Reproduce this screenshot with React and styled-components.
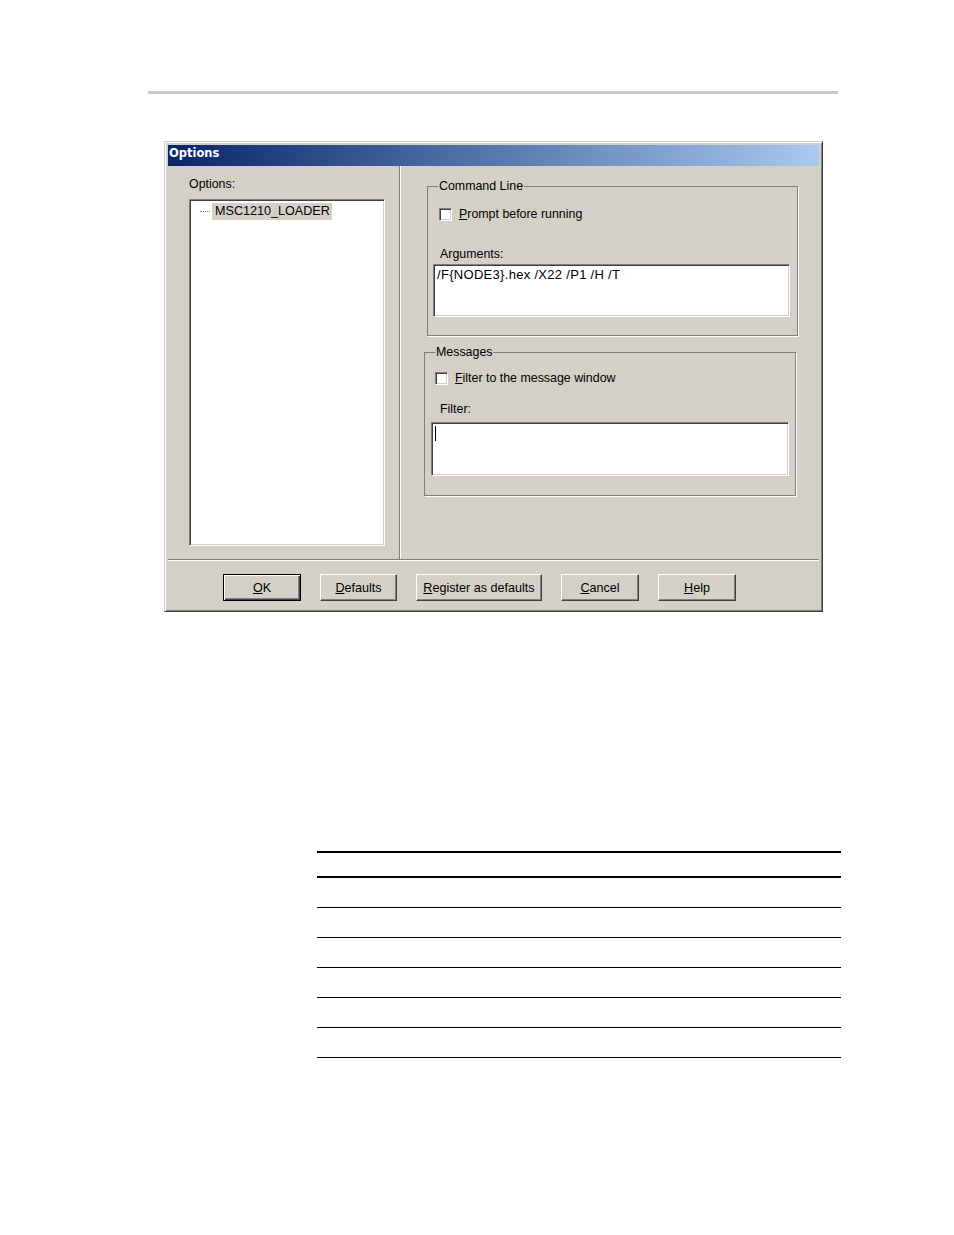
import React from 'react'
import styled, { createGlobalStyle } from 'styled-components'

const GlobalStyle = createGlobalStyle`
    body {
        margin: 0;
        background: #fff;
        font-family: "Liberation Sans", Arial, sans-serif;
    }
`

const face = '#d4d0c8'

const App = () => {
  return (
    <Page>
        <GlobalStyle />
        <TopRule />

        <Dialog>
            <TitleBar>Options</TitleBar>

            <Body>
                <Panes>
                    <LeftPane>
                        <PaneLabel>Options:</PaneLabel>
                        <TreeBox>
                            <TreeItem>
                                <TreeDots />
                                <TreeText>MSC1210_LOADER</TreeText>
                            </TreeItem>
                        </TreeBox>
                    </LeftPane>

                    <VSep />

                    <RightPane>
                        <Group $left={26} $width={371}>
                            <Legend>Command Line</Legend>
                            <CheckRow $top={14} $left={11}>
                                <CheckBox />
                                <span><u>P</u>rompt before running</span>
                            </CheckRow>
                            <FieldLabel $top={26} $left={12}>Arguments:</FieldLabel>
                            <TextBox $top={3} $left={5} $right={7} $height={53}>
                                /F&#123;NODE3&#125;.hex /X22 /P1 /H /T
                            </TextBox>
                            <GroupEnd $h={18} />
                        </Group>

                        <Group $left={23} $width={372} $top={9}>
                            <Legend>Messages</Legend>
                            <CheckRow $top={12} $left={10}>
                                <CheckBox />
                                <span><u>F</u>ilter to the message window</span>
                            </CheckRow>
                            <FieldLabel $top={17} $left={15}>Filter:</FieldLabel>
                            <TextBox $top={6} $left={6} $right={6} $height={54}>
                                <Caret />
                            </TextBox>
                            <GroupEnd $h={19} />
                        </Group>
                    </RightPane>
                </Panes>

                <HSep />

                <ButtonBar>
                    <Button $w={78} $default><u>O</u>K</Button>
                    <Button $w={77}><u>D</u>efaults</Button>
                    <Button $w={126}><u>R</u>egister as defaults</Button>
                    <Button $w={78}><u>C</u>ancel</Button>
                    <Button $w={78}><u>H</u>elp</Button>
                </ButtonBar>
            </Body>
        </Dialog>

        <Table>
            <TableHead />
            {[0, 1, 2, 3, 4, 5].map(i => <TableRow key={i} />)}
        </Table>
    </Page>
  )
}

export default App

const Page = styled.div`
    padding-top: 91px;
    padding-bottom: 100px;
`

const TopRule = styled.div`
    margin-left: 148px;
    width: 690px;
    height: 3px;
    background: #cbcbcb;
`

const Dialog = styled.div`
    box-sizing: border-box;
    margin: 47px 0 0 164px;
    width: 659px;
    padding: 3px;
    background: ${face};
    border: 1px solid;
    border-color: ${face} #404040 #404040 ${face};
    box-shadow: inset 1px 1px 0 #fff, inset -1px -1px 0 #808080;
    font-size: 12.4px;
    color: #000;
`

const TitleBar = styled.div`
    box-sizing: border-box;
    height: 21px;
    line-height: 20px;
    padding: 1px 0 0 1px;
    background: linear-gradient(to right, #0a246a, #a6caf0);
    color: #fff;
    font: bold 11.5px "DejaVu Sans", Verdana, sans-serif;
`

const Body = styled.div`
    display: flex;
    flex-direction: column;
`

const Panes = styled.div`
    display: flex;
    height: 393px;
`

const LeftPane = styled.div`
    width: 231px;
    padding: 11px 0 0 21px;
    box-sizing: border-box;
`

const PaneLabel = styled.div`
    line-height: 14px;
    margin-bottom: 8px;
`

const sunken = `
    box-sizing: border-box;
    background: #fff;
    border: 1px solid;
    border-color: #808080 #fff #fff #808080;
    box-shadow: inset 1px 1px 0 #404040, inset -1px -1px 0 ${face};
`

const TreeBox = styled.div`
    ${sunken}
    width: 196px;
    height: 347px;
    padding: 3px 0 0 10px;
`

const TreeItem = styled.div`
    display: flex;
    align-items: center;
`

const TreeDots = styled.span`
    width: 10px;
    border-top: 1px dotted #808080;
    margin-right: 2px;
`

const TreeText = styled.span`
    background: ${face};
    padding: 0 2px 0 3px;
    line-height: 17px;
    font-size: 12.6px;
`

const VSep = styled.div`
    width: 0;
    border-left: 1px solid #808080;
    border-right: 1px solid #fff;
`

const RightPane = styled.div`
    flex: 1;
    display: flex;
    flex-direction: column;
    padding-top: 13px;
`

const Group = styled.fieldset`
    box-sizing: border-box;
    margin: ${p => p.$top || 0}px 0 0 ${p => p.$left}px;
    width: ${p => p.$width}px;
    padding: 0;
    min-width: 0;
    border: 1px solid #808080;
    box-shadow: 1px 1px 0 #fff;
    display: flex;
    flex-direction: column;
`

const Legend = styled.legend`
    margin-left: 10px;
    padding: 0 1px;
    line-height: 14px;
    background: ${face};
`

const CheckRow = styled.div`
    display: flex;
    align-items: center;
    gap: 7px;
    margin: ${p => p.$top}px 0 0 ${p => p.$left}px;
    line-height: 14px;
`

const CheckBox = styled.span`
    ${sunken}
    width: 13px;
    height: 13px;
    flex: none;
`

const FieldLabel = styled.div`
    margin: ${p => p.$top}px 0 0 ${p => p.$left}px;
    line-height: 14px;
`

const TextBox = styled.div`
    ${sunken}
    margin: ${p => p.$top}px ${p => p.$right}px 0 ${p => p.$left}px;
    height: ${p => p.$height}px;
    padding: 3px 3px;
    line-height: 14px;
    font-size: 13px;
    letter-spacing: 0.3px;
    white-space: pre;
`

const Caret = styled.span`
    display: inline-block;
    width: 1px;
    height: 15px;
    background: #000;
    vertical-align: top;
`

const GroupEnd = styled.div`
    height: ${p => p.$h}px;
`

const HSep = styled.div`
    height: 0;
    border-top: 1px solid #808080;
    border-bottom: 1px solid #fff;
`

const ButtonBar = styled.div`
    height: 47px;
    box-sizing: border-box;
    padding: 13px 0 0 55px;
    display: flex;
    align-items: flex-start;
    gap: 19px;
`

const Button = styled.div`
    box-sizing: border-box;
    width: ${p => p.$w}px;
    height: 27px;
    display: flex;
    align-items: center;
    justify-content: center;
    background: ${face};
    border: 1px solid;
    border-color: ${p => p.$default ? '#000' : '#fff #404040 #404040 #fff'};
    box-shadow: ${p => p.$default
        ? 'inset 1px 1px 0 #fff, inset -1px -1px 0 #404040, inset -2px -2px 0 #808080'
        : 'inset -1px -1px 0 #808080'};
    font-size: 12.6px;
`

const Table = styled.div`
    margin: 239px 0 0 317px;
    width: 524px;
`

const TableHead = styled.div`
    height: 23px;
    border-top: 2px solid #000;
    border-bottom: 2px solid #000;
`

const TableRow = styled.div`
    height: 29px;
    border-bottom: 1px solid #000;
`
